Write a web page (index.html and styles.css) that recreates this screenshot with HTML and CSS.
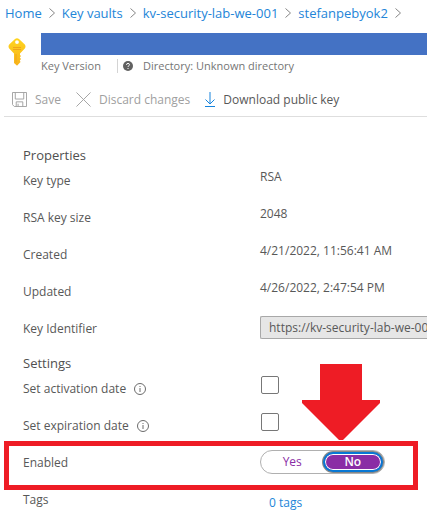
FILE: index.html
```html
<!DOCTYPE html>
<html lang="en">
<head>
<meta charset="utf-8">
<meta name="viewport" content="width=device-width, initial-scale=1">
<title>Key Version</title>
<link rel="stylesheet" href="styles.css">
</head>
<body>
<nav class="breadcrumb" aria-label="Breadcrumb">
  <a href="#">Home</a>
  <svg class="chevron" viewBox="0 0 6 10"><path d="M.5.5 5.5 5 .5 9.5"/></svg>
  <a href="#">Key vaults</a>
  <svg class="chevron" viewBox="0 0 6 10"><path d="M.5.5 5.5 5 .5 9.5"/></svg>
  <a href="#">kv-security-lab-we-001</a>
  <svg class="chevron" viewBox="0 0 6 10"><path d="M.5.5 5.5 5 .5 9.5"/></svg>
  <a href="#">stefanpebyok2</a>
  <svg class="chevron" viewBox="0 0 6 10"><path d="M.5.5 5.5 5 .5 9.5"/></svg>
</nav>
<header class="header">
  <svg class="key" viewBox="0 0 18 28">
    <defs><linearGradient id="gold" x2="0" y2="1"><stop stop-color="#ffd51f"/><stop offset="1" stop-color="#f8b31c"/></linearGradient></defs>
    <path fill="url(#gold)" fill-rule="evenodd" d="M7 1Q9-.4 11 1L16.800 6.500Q18.200 8.500 16.800 10.500L12 15.500V17L13 18 11.800 19.500 13 21 11.800 22.500 12.500 24 9.500 27.200Q9 27.600 8.500 27.200L6 25V15.500L1.200 10.500Q-.2 8.500 1.200 6.500ZM9 2.200A1.900 1.900 0 1 0 9 6 1.900 1.900 0 1 0 9 2.200Z"/>
    <path stroke="#f0a51a" d="M5 9.500H13M5 11.500H13M8 16V24.500"/>
  </svg>
  <div class="header-main">
    <div class="title-bar"></div>
    <div class="subtitle">
      <span class="kind">Key Version</span>
      <svg class="help" viewBox="0 0 10 10"><circle cx="5" cy="5" r="5" fill="#616161"/><path d="M3.500 3.900Q3.600 2.400 5 2.400T6.500 3.700Q6.500 4.500 5.600 4.900 5 5.200 5 6M5 7V8" fill="none" stroke="#fff"/></svg>
      <span>Directory: Unknown directory</span>
    </div>
  </div>
</header>
<div class="toolbar" role="toolbar">
  <button type="button" disabled><svg class="save" viewBox="0 0 16 16"><path d="M.5.5H15.500V15.500H2.500L.5 13.500ZM3.500.5V7.500H12.500V.5M4.500 15.500V10.500H11.500V15.500M6.500 12.500V15.500"/></svg>Save</button>
  <button type="button" disabled><svg class="save" viewBox="0 0 16 16"><path d="M.5.5 15.500 15.500M15.500.5.5 15.500"/></svg>Discard changes</button>
  <button type="button"><svg class="download" viewBox="0 0 10 16"><path d="M5 0V12M.5 7.500 5 12 9.500 7.500M0 14.500H10"/></svg>Download public key</button>
</div>
<main class="content">
  <h2>Properties</h2>
  <dl class="rows">
    <div class="row"><dt>Key type</dt><dd>RSA</dd></div>
    <div class="row"><dt>RSA key size</dt><dd>2048</dd></div>
    <div class="row"><dt>Created</dt><dd>4/21/2022, 11:56:41 AM</dd></div>
    <div class="row"><dt>Updated</dt><dd>4/26/2022, 2:47:54 PM</dd></div>
    <div class="row"><dt><label for="identifier">Key Identifier</label></dt><dd><input id="identifier" class="identifier" type="text" readonly value="https://kv-security-lab-we-001"></dd></div>
  </dl>
  <h2>Settings</h2>
  <div class="rows">
    <div class="row">
      <label for="activation">Set activation date <svg class="info" viewBox="0 0 12 12"><circle cx="6" cy="6" r="5.500"/><path d="M6 5V9M6 3V4"/></svg></label>
      <input id="activation" class="check" type="checkbox">
    </div>
    <div class="row">
      <label for="expiration">Set expiration date <svg class="info" viewBox="0 0 12 12"><circle cx="6" cy="6" r="5.500"/><path d="M6 5V9M6 3V4"/></svg></label>
      <input id="expiration" class="check" type="checkbox">
    </div>
    <div class="row enabled">
      <span id="enabled-label">Enabled</span>
      <div class="toggle" role="radiogroup" aria-labelledby="enabled-label">
        <label class="option"><input type="radio" name="enabled">Yes</label>
        <label class="option"><input type="radio" name="enabled" checked>No</label>
      </div>
      <div class="highlight"></div>
      <svg class="arrow" viewBox="0 0 78 77"><path d="M18 0H60V36H78V39L41 76H37L0 39V36H18Z"/></svg>
    </div>
    <div class="row"><span>Tags</span><a class="tags" href="#">0 tags</a></div>
  </div>
</main>
</body>
</html>
```
FILE: styles.css
```css
* { box-sizing: border-box; }
body {
  margin: 0;
  background: #fff;
  color: #585858;
  font: 12px/20px "Open Sans", "Noto Sans", sans-serif;
  overflow: hidden;
}
svg { flex: none; fill: none; }
a { color: #2385d8; text-decoration: none; }
input, button { font: inherit; color: inherit; margin: 0; }

.breadcrumb {
  display: flex;
  align-items: center;
  gap: 7px;
  height: 25px;
  padding-left: 5px;
  font-size: 13px;
  white-space: nowrap;
}
.chevron { width: 6px; height: 10px; stroke: #858585; }

.header { display: flex; gap: 15px; padding: 8px 0 0 8px; }
.key { width: 18px; height: 28px; margin-top: 5px; }
.header-main { flex: 1; }
.title-bar { height: 22px; background: #4472c4; }
.subtitle {
  display: flex;
  align-items: center;
  gap: 10px;
  height: 22px;
  font-size: 11px;
  color: #757575;
}
.kind { width: 77px; border-right: 1px solid #d4d4d4; line-height: 14px; }
.help { width: 10px; height: 10px; margin-left: -5px; }

.toolbar {
  display: flex;
  align-items: center;
  gap: 15px;
  height: 40px;
  margin-left: 4px;
  padding: 6px 0 0 8px;
  border-bottom: 1px solid #dedede;
}
.toolbar button {
  display: flex;
  align-items: center;
  gap: 8px;
  padding: 0;
  border: 0;
  background: none;
  white-space: nowrap;
}
.toolbar button:disabled { color: #a0a0a0; }
.save { width: 15px; height: 15px; stroke: #a0a0a0; }
.download { width: 10px; height: 16px; stroke: #1683dc; }

.content { padding: 28px 0 0 23px; }
h2 { margin: 0; font-size: 13px; font-weight: 400; color: #505050; }
.rows { margin: 0 0 3px; }
.row {
  position: relative;
  display: grid;
  grid-template-columns: 237px 1fr;
  align-items: start;
  height: 37px;
  line-height: 31px;
}
dd { margin: 0; line-height: 24px; }
.identifier {
  display: block;
  width: 100%;
  height: 23px;
  margin-top: 3px;
  padding: 0 0 0 8px;
  border: 1px solid #a8a8a8;
  border-right: 0;
  border-radius: 2px 0 0 2px;
  background: #e6e6e6;
}
.info { width: 12px; height: 12px; margin-left: 5px; stroke: #6b6b6b; vertical-align: -2px; }
.check {
  appearance: none;
  width: 18px;
  height: 18px;
  margin: 3px 0 0 1px;
  border: 1px solid #777;
  border-radius: 2px;
  background: #fff;
}
.toggle {
  display: grid;
  grid-template-columns: 1fr 1fr;
  width: 125px;
  height: 24px;
  margin-top: 3px;
  padding: 1px;
  border: 1px solid #b0b0b0;
  border-radius: 12px;
  line-height: 20px;
  text-align: center;
}
.option { color: #8a2da5; border-radius: 10px; }
.option input { position: absolute; opacity: 0; pointer-events: none; }
.option:has(:checked) {
  border: 2px solid #0878d4;
  box-shadow: inset 0 0 0 1px #fff, 0 0 0 1px #888;
  background: #8a2da5;
  color: #fff;
  font-weight: 600;
  line-height: 16px;
}
.highlight {
  position: absolute;
  inset: -6px 9px -6px -19px;
  border: 5px solid #ee1c25;
  pointer-events: none;
}
.arrow {
  position: absolute;
  left: 279px;
  bottom: 43px;
  width: 78px;
  height: 77px;
  fill: #ee1c25;
  pointer-events: none;
}
.tags { margin-left: 9px; line-height: 37px; }
```
